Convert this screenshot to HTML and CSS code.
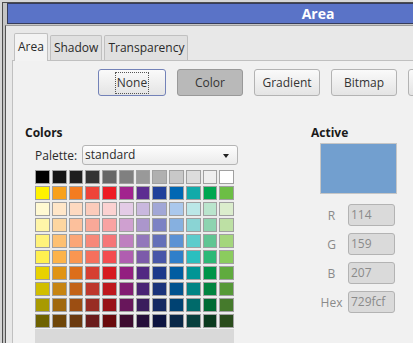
FILE: index.html
```html
<!DOCTYPE html>
<html lang="en">
  <head>
    <meta charset="UTF-8" />
    <title>Area</title>
    <link rel="stylesheet" href="styles.css">
  </head>
  <body>
    <div class="frame">
      <div class="titlebar">Area</div>

      <div class="dialog">
        <!-- Tabs -->
        <div class="tabs">
          <div class="tab active">Area</div>
          <div class="tab">Shadow</div>
          <div class="tab">Transparency</div>
        </div>

        <div class="panel">
          <!-- Fill types -->
          <div class="fill-types">
            <button class="btn focused"><span class="focus">None</span></button>
            <button class="btn pressed">Color</button>
            <button class="btn">Gradient</button>
            <button class="btn">Bitmap</button>
            <button class="btn" aria-label="Pattern"></button>
          </div>

          <div class="columns">
            <!-- Colors -->
            <div class="colors">
              <div class="heading">Colors</div>
              <div class="palette-row">
                <span class="label">Palette:</span>
                <div class="select">standard<span class="arrow"></span></div>
              </div>
              <div class="swatches">
                <div class="cell" style="background:#000000"></div>
                <div class="cell" style="background:#141414"></div>
                <div class="cell" style="background:#1e1e1e"></div>
                <div class="cell" style="background:#333333"></div>
                <div class="cell" style="background:#666666"></div>
                <div class="cell" style="background:#808080"></div>
                <div class="cell" style="background:#999999"></div>
                <div class="cell" style="background:#b0b0b0"></div>
                <div class="cell" style="background:#c8c8c8"></div>
                <div class="cell" style="background:#dcdcdc"></div>
                <div class="cell" style="background:#eeeeee"></div>
                <div class="cell" style="background:#ffffff"></div>

                <div class="cell" style="background:#fff200"></div>
                <div class="cell" style="background:#f8a11c"></div>
                <div class="cell" style="background:#f47c20"></div>
                <div class="cell" style="background:#ee4338"></div>
                <div class="cell" style="background:#ed1c24"></div>
                <div class="cell" style="background:#a2238e"></div>
                <div class="cell" style="background:#5c2d91"></div>
                <div class="cell" style="background:#21409a"></div>
                <div class="cell" style="background:#0067b3"></div>
                <div class="cell" style="background:#12aaa9"></div>
                <div class="cell" style="background:#00a651"></div>
                <div class="cell" style="background:#6cbe45"></div>

                <div class="cell" style="background:#fff9d2"></div>
                <div class="cell" style="background:#ffe6c8"></div>
                <div class="cell" style="background:#fdd9c0"></div>
                <div class="cell" style="background:#fbcbbb"></div>
                <div class="cell" style="background:#fbd2d1"></div>
                <div class="cell" style="background:#e3cbe6"></div>
                <div class="cell" style="background:#c9b8de"></div>
                <div class="cell" style="background:#a2a7d6"></div>
                <div class="cell" style="background:#aac8ec"></div>
                <div class="cell" style="background:#bbe7e7"></div>
                <div class="cell" style="background:#bae5cd"></div>
                <div class="cell" style="background:#dbedcd"></div>

                <div class="cell" style="background:#fff5a8"></div>
                <div class="cell" style="background:#fdd6a0"></div>
                <div class="cell" style="background:#fcc09c"></div>
                <div class="cell" style="background:#f9a898"></div>
                <div class="cell" style="background:#f9a3a2"></div>
                <div class="cell" style="background:#cfa0d0"></div>
                <div class="cell" style="background:#ab96cc"></div>
                <div class="cell" style="background:#7c82c4"></div>
                <div class="cell" style="background:#86b0e0"></div>
                <div class="cell" style="background:#8ad4d4"></div>
                <div class="cell" style="background:#8ed4b0"></div>
                <div class="cell" style="background:#bde0a4"></div>

                <div class="cell" style="background:#fff27a"></div>
                <div class="cell" style="background:#fdc072"></div>
                <div class="cell" style="background:#fba677"></div>
                <div class="cell" style="background:#f78879"></div>
                <div class="cell" style="background:#f57677"></div>
                <div class="cell" style="background:#be7fbf"></div>
                <div class="cell" style="background:#9277bb"></div>
                <div class="cell" style="background:#6470b8"></div>
                <div class="cell" style="background:#5b92d4"></div>
                <div class="cell" style="background:#5ccccc"></div>
                <div class="cell" style="background:#60c593"></div>
                <div class="cell" style="background:#a4d67c"></div>

                <div class="cell" style="background:#fff050"></div>
                <div class="cell" style="background:#fcb34a"></div>
                <div class="cell" style="background:#fa9651"></div>
                <div class="cell" style="background:#f5705c"></div>
                <div class="cell" style="background:#f34d50"></div>
                <div class="cell" style="background:#b05eb0"></div>
                <div class="cell" style="background:#7c5aaa"></div>
                <div class="cell" style="background:#4856a8"></div>
                <div class="cell" style="background:#2f7fca"></div>
                <div class="cell" style="background:#2bbfbf"></div>
                <div class="cell" style="background:#2db876"></div>
                <div class="cell" style="background:#8bcc5e"></div>

                <div class="cell" style="background:#e8d200"></div>
                <div class="cell" style="background:#e09415"></div>
                <div class="cell" style="background:#dc6e1a"></div>
                <div class="cell" style="background:#d63e31"></div>
                <div class="cell" style="background:#d61a21"></div>
                <div class="cell" style="background:#931f80"></div>
                <div class="cell" style="background:#522882"></div>
                <div class="cell" style="background:#1d398a"></div>
                <div class="cell" style="background:#005da1"></div>
                <div class="cell" style="background:#009595"></div>
                <div class="cell" style="background:#009448"></div>
                <div class="cell" style="background:#60ab3e"></div>

                <div class="cell" style="background:#d1be00"></div>
                <div class="cell" style="background:#c68412"></div>
                <div class="cell" style="background:#c36217"></div>
                <div class="cell" style="background:#be372c"></div>
                <div class="cell" style="background:#be171d"></div>
                <div class="cell" style="background:#821c72"></div>
                <div class="cell" style="background:#492474"></div>
                <div class="cell" style="background:#1a337b"></div>
                <div class="cell" style="background:#00538f"></div>
                <div class="cell" style="background:#008585"></div>
                <div class="cell" style="background:#008440"></div>
                <div class="cell" style="background:#569937"></div>

                <div class="cell" style="background:#a89a00"></div>
                <div class="cell" style="background:#a0680d"></div>
                <div class="cell" style="background:#9c4e12"></div>
                <div class="cell" style="background:#982c23"></div>
                <div class="cell" style="background:#981217"></div>
                <div class="cell" style="background:#68165b"></div>
                <div class="cell" style="background:#3a1d5d"></div>
                <div class="cell" style="background:#152962"></div>
                <div class="cell" style="background:#004272"></div>
                <div class="cell" style="background:#006a6a"></div>
                <div class="cell" style="background:#006a33"></div>
                <div class="cell" style="background:#457a2c"></div>

                <div class="cell" style="background:#6e6200"></div>
                <div class="cell" style="background:#6f4608"></div>
                <div class="cell" style="background:#6b3a10"></div>
                <div class="cell" style="background:#6a1c1c"></div>
                <div class="cell" style="background:#6a0a0c"></div>
                <div class="cell" style="background:#3e0c30"></div>
                <div class="cell" style="background:#250e3a"></div>
                <div class="cell" style="background:#0d1440"></div>
                <div class="cell" style="background:#0a2848"></div>
                <div class="cell" style="background:#08403e"></div>
                <div class="cell" style="background:#0a3a1e"></div>
                <div class="cell" style="background:#2a4c1c"></div>
              </div>
              <div class="recent"></div>
            </div>

            <!-- Active color -->
            <div class="active-color">
              <div class="heading">Active</div>
              <div class="preview" style="background:#729fcf"></div>
              <div class="fields">
                <div class="field"><span class="field-label">R</span><div class="input">114</div></div>
                <div class="field"><span class="field-label">G</span><div class="input">159</div></div>
                <div class="field"><span class="field-label">B</span><div class="input">207</div></div>
                <div class="field"><span class="field-label">Hex</span><div class="input">729fcf</div></div>
              </div>
            </div>
          </div>
        </div>
      </div>
    </div>
  </body>
</html>
```

FILE: styles.css
```css
body {
  margin: 0;
  width: 413px;
  height: 343px;
  overflow: hidden;
  background-color: #d6d6d6;
  font-family: 'Open Sans', sans-serif;
  font-size: 12px;
  color: #2a2a2a;
}
.frame {
  width: 700px;
  height: 400px;
  margin: 2px 0 0 2px;
  border-left: 1px solid #4d4d4d;
  border-top: 1px solid #4d4d4d;
  background-color: #c4c4c4;
}
.titlebar {
  width: 620px;
  height: 19px;
  margin-left: 4px;
  border: 1px solid #363c5a;
  background-color: #5a73c7;
  color: #fff;
  font-size: 14px;
  font-weight: bold;
  line-height: 19px;
  text-align: center;
}
.dialog {
  margin: 1px 0 0 2px;
  padding: 7px 0 0 6px;
  height: 400px;
  border-left: 1px solid #555;
  border-top: 1px solid #9a9a9a;
  background-color: #e8e8e8;
}
.tabs {
  display: flex;
  align-items: flex-end;
  gap: 2px;
  height: 27px;
  padding-left: 2px;
}
.tab {
  height: 24px;
  line-height: 23px;
  padding: 0 3px;
  border: 1px solid #c0c0c0;
  border-bottom: none;
  border-radius: 2px 2px 0 0;
  background-color: #e0e0e0;
}
.tab.active {
  height: 27px;
  line-height: 26px;
  margin-bottom: -1px;
  background-color: #f3f3f3;
  position: relative;
}
.panel {
  height: 400px;
  border: 1px solid #c0c0c0;
  background-color: #f1f1f1;
}
.fill-types {
  display: flex;
  gap: 11px;
  padding: 8px 0 0 85px;
}
.btn {
  flex: none;
  width: 66px;
  height: 27px;
  padding: 0;
  border: 1px solid #b3b3b3;
  border-radius: 3px;
  background: linear-gradient(#fafafa, #e4e4e4);
  font-family: 'Open Sans', sans-serif;
  font-size: 12px;
  color: #333;
}
.btn.focused {
  width: 68px;
  border-color: #7382b8;
}
.btn.pressed {
  background: #b9b9b9;
  border-color: #999;
}
.focus {
  padding: 1px 1px 2px;
  border: 1px dotted #555;
}
.columns {
  display: flex;
  padding: 28px 0 0 12px;
}
.heading {
  font-weight: bold;
  line-height: 18px;
  color: #1a1a1a;
}
.colors {
  width: 286px;
}
.palette-row {
  display: flex;
  align-items: center;
  gap: 5px;
  margin: 3px 0 0 10px;
}
.select {
  position: relative;
  width: 152px;
  height: 18px;
  line-height: 18px;
  padding-left: 2px;
  border: 1px solid #b5b5b5;
  border-radius: 3px;
  background: linear-gradient(#fdfdfd, #ebebeb);
}
.arrow {
  position: absolute;
  right: 8px;
  top: 8px;
  border-left: 3.5px solid transparent;
  border-right: 3.5px solid transparent;
  border-top: 4px solid #222;
}
.swatches {
  display: grid;
  grid-template-columns: repeat(12, 1fr);
  grid-auto-rows: 14px;
  gap: 2px;
  width: 199px;
  margin: 5px 0 0 10px;
  background-color: #ececec;
}
.cell {
  border: 1px solid #a0a0a0;
}
.recent {
  width: 199px;
  height: 20px;
  margin: 1px 0 0 10px;
  background-color: #d9d9d9;
}
.preview {
  width: 75px;
  height: 49px;
  margin: 1px 0 0 9px;
  border: 1px solid #c6c6c6;
}
.fields {
  display: flex;
  flex-direction: column;
  gap: 7px;
  margin: 10px 0 0 9px;
}
.field {
  display: flex;
  align-items: center;
  gap: 5px;
}
.field-label {
  width: 23px;
  text-align: center;
  color: #8a8a8a;
}
.input {
  width: 43px;
  height: 20px;
  line-height: 20px;
  padding-left: 2px;
  border: 1px solid #b3b3b3;
  border-radius: 3px;
  background-color: #dadada;
  color: #8a8a8a;
}
```
